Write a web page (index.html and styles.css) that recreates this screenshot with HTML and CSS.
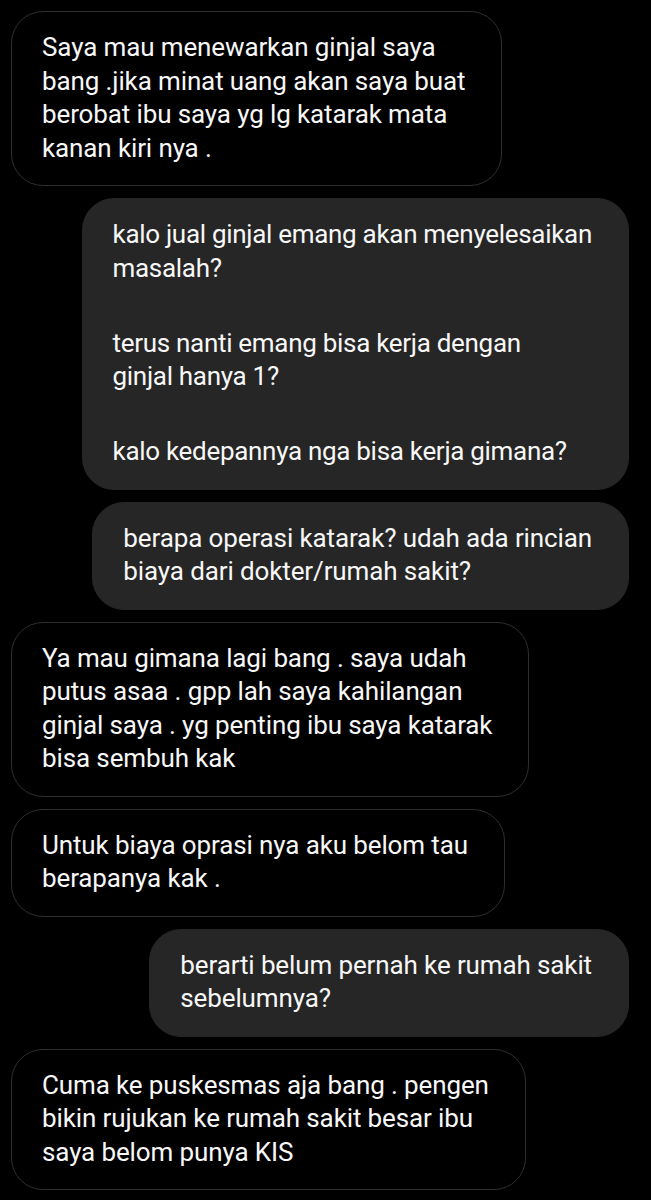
FILE: index.html
```html
<!DOCTYPE html>
<html lang="id">
<head>
<meta charset="utf-8">
<title>Chat</title>
<link rel="stylesheet" href="styles.css">
</head>
<body>
<main class="thread">
  <div class="msg msg-in">
    <p>Saya mau menewarkan ginjal saya<br>bang .jika minat uang akan saya buat<br>berobat ibu saya yg lg katarak mata<br>kanan kiri nya .</p>
  </div>
  <div class="msg msg-out msg-tight">
    <p>kalo jual ginjal emang akan menyelesaikan<br>masalah?</p>
    <p>terus nanti emang bisa kerja dengan<br>ginjal hanya 1?</p>
    <p>kalo kedepannya nga bisa kerja gimana?</p>
  </div>
  <div class="msg msg-out">
    <p>berapa operasi katarak? udah ada rincian<br>biaya dari dokter/rumah sakit?</p>
  </div>
  <div class="msg msg-in">
    <p>Ya mau gimana lagi bang . saya udah<br>putus asaa . gpp lah saya kahilangan<br>ginjal saya . yg penting ibu saya katarak<br>bisa sembuh kak</p>
  </div>
  <div class="msg msg-in">
    <p>Untuk biaya oprasi nya aku belom tau<br>berapanya kak .</p>
  </div>
  <div class="msg msg-out">
    <p>berarti belum pernah ke rumah sakit<br>sebelumnya?</p>
  </div>
  <div class="msg msg-in">
    <p>Cuma ke puskesmas aja bang . pengen<br>bikin rujukan ke rumah sakit besar ibu<br>saya belom punya KIS</p>
  </div>
</main>
</body>
</html>
```
FILE: styles.css
```css
html, body {
  margin: 0;
  padding: 0;
  background: #000;
}

body {
  font-family: Roboto, "Liberation Sans", sans-serif;
  color: #f7f7f7;
  -webkit-font-smoothing: antialiased;
}

.thread {
  display: flex;
  flex-direction: column;
  gap: 12px;
  padding: 11px 22px 0 11px;
}

.msg {
  box-sizing: border-box;
  width: fit-content;
  padding: 19px 36px 20px 30px;
  border-radius: 32px;
  font-size: 26px;
  line-height: 33.5px;
  letter-spacing: -0.12px;
}

.msg p {
  margin: 0;
  white-space: nowrap;
}

.msg p + p {
  margin-top: 41.5px;
}

.msg-tight {
  letter-spacing: -0.3px;
}

.msg-in {
  align-self: flex-start;
  border: 1px solid #2e2e2e;
  background: #000;
}

.msg-out {
  align-self: flex-end;
  border: 1px solid #262626;
  background: #262626;
}
```
